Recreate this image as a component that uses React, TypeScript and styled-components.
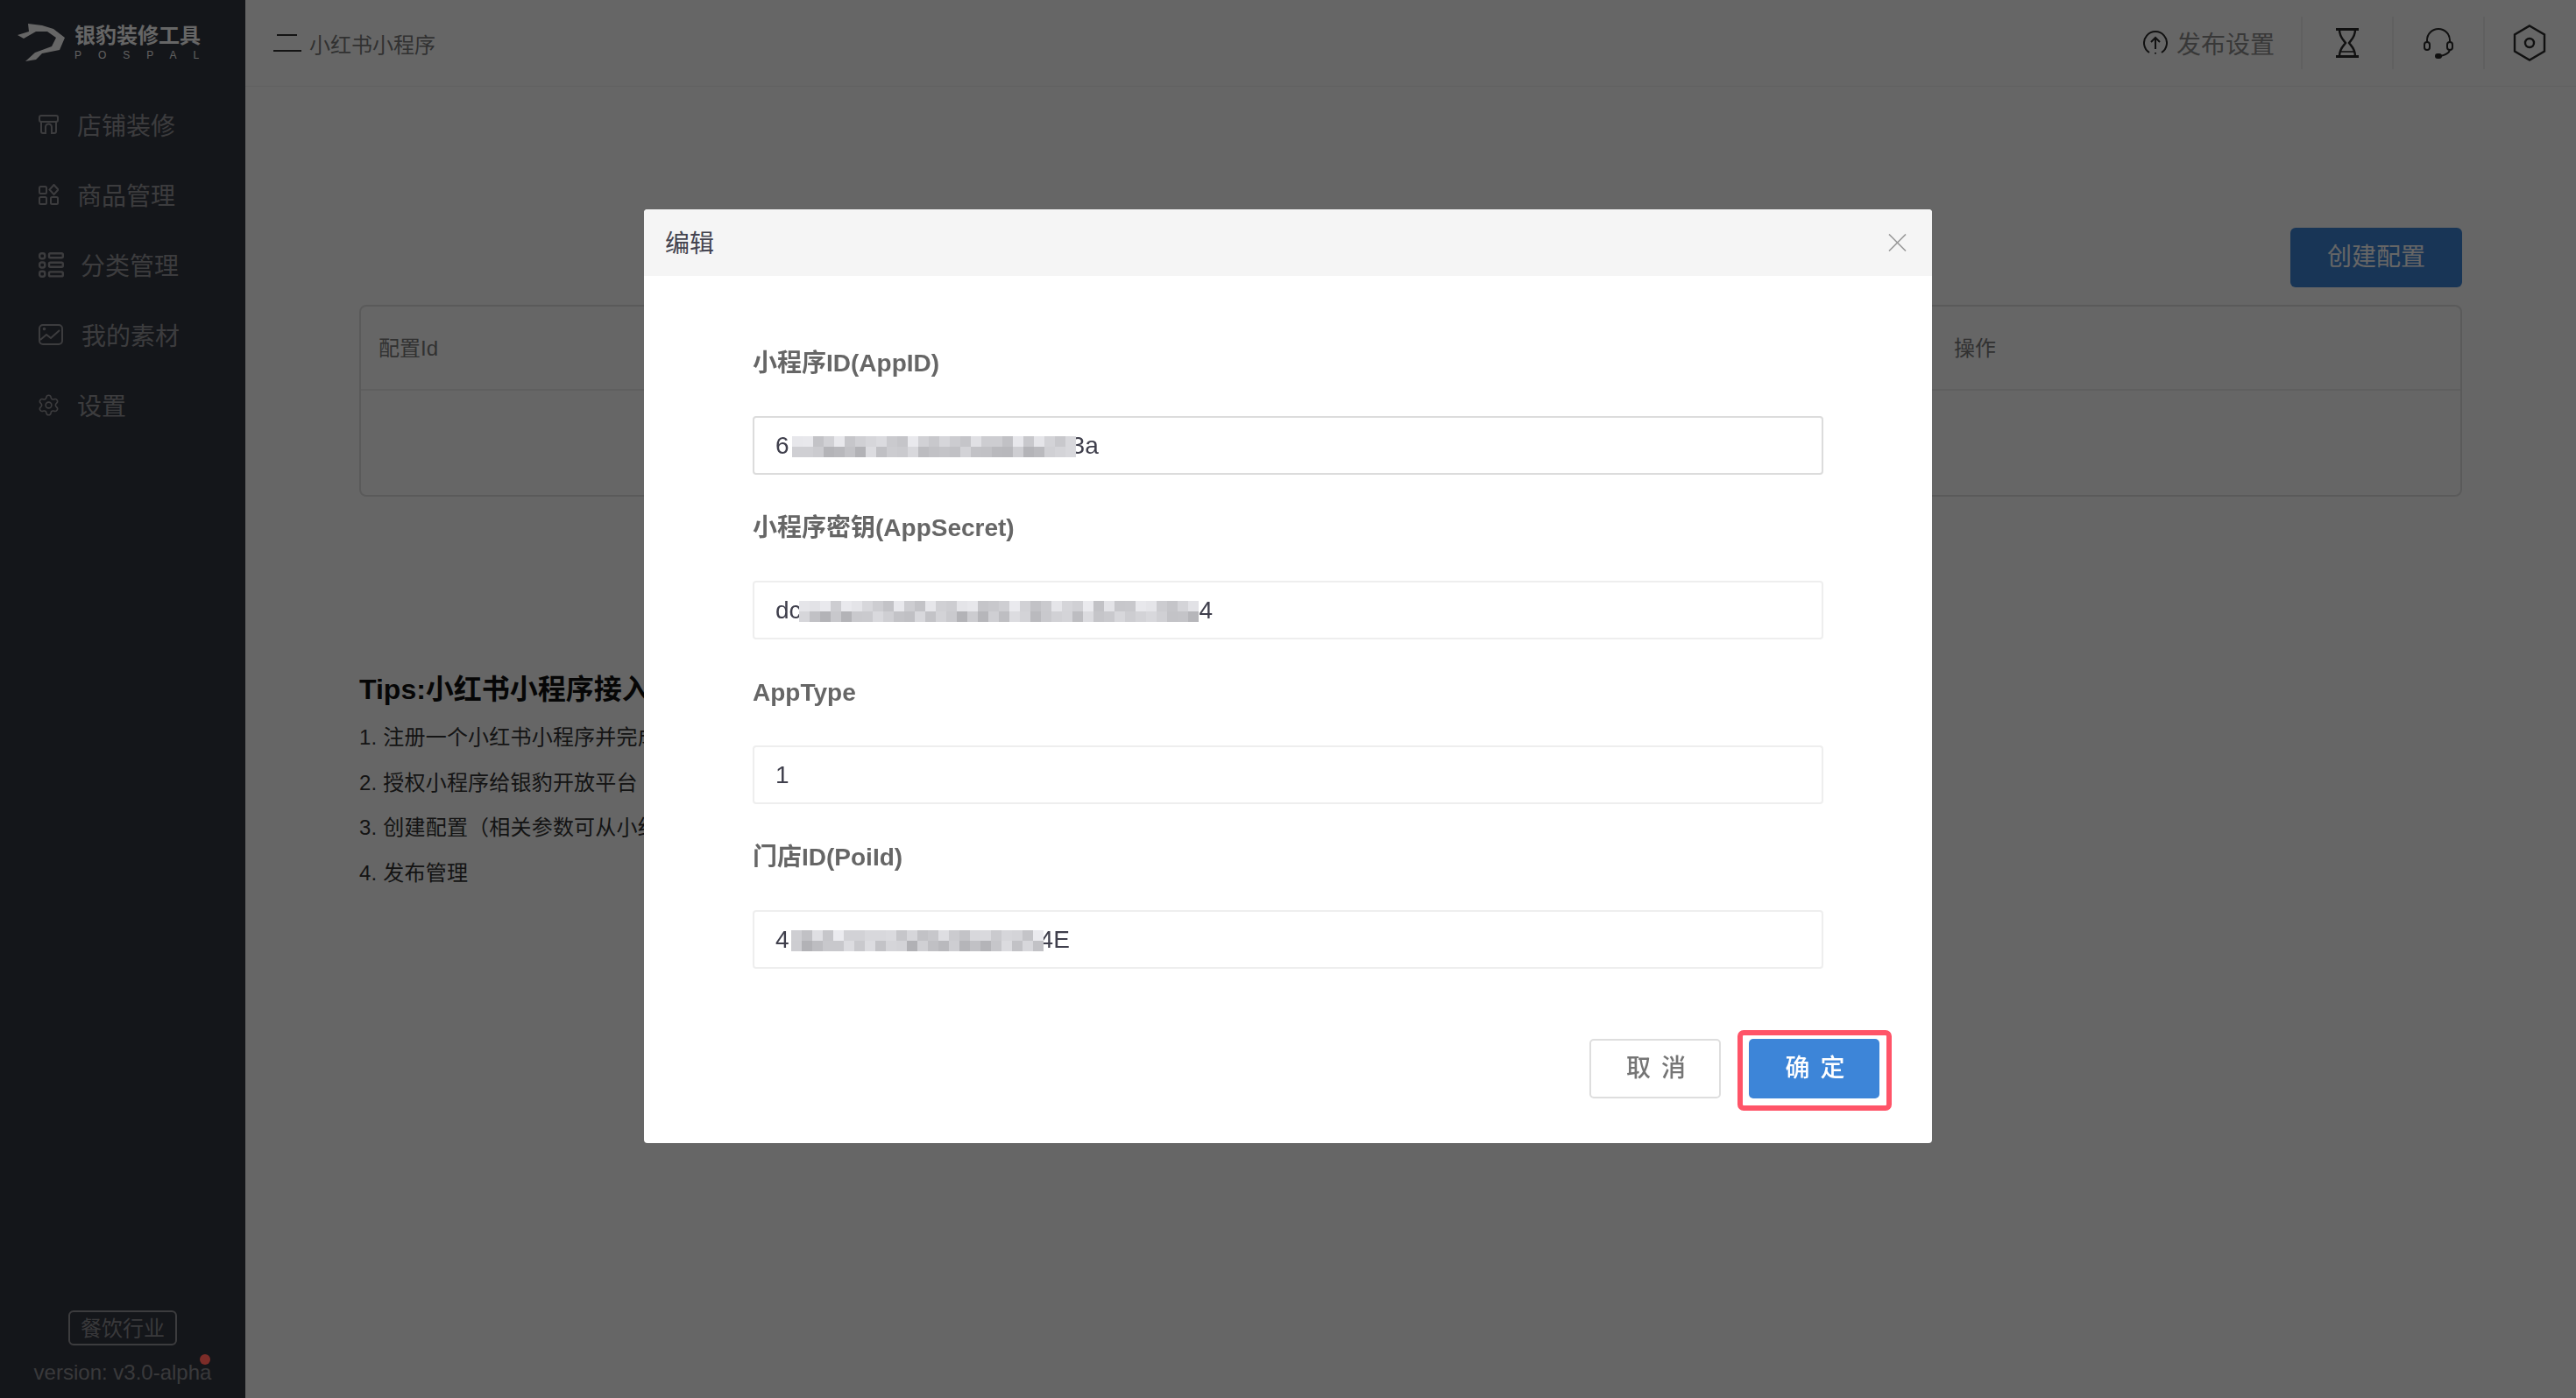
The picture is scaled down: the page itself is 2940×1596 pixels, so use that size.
import React from 'react';
import styled, { createGlobalStyle } from 'styled-components';
import { Settings } from 'lucide-react';

const GlobalStyle = createGlobalStyle`
  html, body {
    margin: 0;
    padding: 0;
    height: 100%;
    overflow: hidden;
    background: #fff;
    font-family: "Liberation Sans", "Noto Sans CJK SC", sans-serif;
  }
  * { box-sizing: border-box; }
`;

const Page = styled.div`
  display: flex;
  height: 100vh;
`;

const Sidebar = styled.aside`
  width: 280px;
  flex: none;
  display: flex;
  flex-direction: column;
  background: #343741;
  color: #9a9a9e;
`;

const Logo = styled.div`
  height: 99px;
  padding: 26px 0 0 20px;
  display: flex;
  gap: 11px;
  color: #fff;
`;

const LogoText = styled.div`
  display: flex;
  flex-direction: column;
`;

const LogoTitle = styled.div`
  font-size: 24px;
  line-height: 30px;
  font-weight: 700;
  color: #fff;
  white-space: nowrap;
`;

const LogoSub = styled.div`
  font-size: 12px;
  line-height: 13px;
  margin-top: 1px;
  letter-spacing: 19px;
  white-space: nowrap;
  color: #f0f0f0;
`;

const Nav = styled.nav`
  display: flex;
  flex-direction: column;
  padding-top: 3px;
  flex: 1;
`;

const NavItem = styled.div<{ $shift?: number; $gap?: number }>`
  height: 80px;
  display: flex;
  align-items: center;
  gap: ${(p) => p.$gap ?? 21}px;
  padding-left: ${(p) => 44 + (p.$shift || 0)}px;
  font-size: 28px;
  color: #97979c;
  white-space: nowrap;
  svg { flex: none; color: #97979c; }
`;

const SideFoot = styled.div`
  position: relative;
  display: flex;
  flex-direction: column;
  align-items: center;
  padding-bottom: 15px;
`;

const Badge = styled.div`
  width: 124px;
  height: 40px;
  border: 2px solid #97979c;
  border-radius: 6px;
  font-size: 24px;
  line-height: 38px;
  text-align: center;
  color: #8f8f94;
`;

const Version = styled.div`
  margin-top: 17px;
  font-size: 24px;
  line-height: 28px;
  color: #8f8f94;
  white-space: nowrap;
`;

const RedDot = styled.span`
  position: absolute;
  left: 228px;
  top: 50px;
  width: 12px;
  height: 12px;
  border-radius: 50%;
  background: #7c2c28;
  z-index: 20;
`;

const Main = styled.main`
  flex: 1;
  min-width: 0;
  display: flex;
  flex-direction: column;
`;

const Header = styled.header`
  height: 99px;
  flex: none;
  border-bottom: 1px solid #f0f0f0;
  display: flex;
  align-items: center;
  padding-left: 32px;
`;

const Crumb = styled.div`
  display: flex;
  align-items: center;
  gap: 9px;
  font-size: 24px;
  color: #7c7c7c;
  svg { color: #333; }
`;

const HeaderRight = styled.div`
  margin-left: auto;
  padding-right: 2px;
  display: flex;
  align-items: center;
`;

const PublishBtn = styled.div`
  display: flex;
  align-items: center;
  gap: 10px;
  height: 60px;
  padding-right: 30px;
  font-size: 28px;
  color: #8c8c8c;
  svg { color: #2b2b2b; }
`;

const ToolBtn = styled.div`
  width: 104px;
  height: 60px;
  border-left: 2px solid #f0f0f0;
  display: flex;
  align-items: center;
  justify-content: center;
  color: #2b2b2b;
`;

const Content = styled.section`
  padding: 161px 130px 0;
`;

const TopRow = styled.div`
  display: flex;
  justify-content: flex-end;
  margin-bottom: 20px;
`;

const CreateBtn = styled.div`
  width: 196px;
  height: 68px;
  border-radius: 6px;
  background: #3d85d8;
  color: #fff;
  font-size: 28px;
  line-height: 68px;
  text-align: center;
`;

const Table = styled.div`
  height: 219px;
  border: 2px solid #e2e2e2;
  border-radius: 8px;
`;

const TableHead = styled.div`
  height: 96px;
  border-bottom: 2px solid #eeeeee;
  display: grid;
  grid-template-columns: 1fr 578px;
  align-items: center;
  padding: 0 0 3px 20px;
  font-size: 24px;
  color: #7c7c7c;
`;

const Tips = styled.div`
  margin-top: 200px;
  color: #333;
`;

const TipsTitle = styled.h3`
  margin: 0 0 9px;
  font-size: 32px;
  line-height: 40px;
  font-weight: 700;
  color: #111;
  white-space: nowrap;
`;

const TipLine = styled.div`
  font-size: 24px;
  line-height: 51.5px;
  letter-spacing: 0.2px;
  white-space: nowrap;
`;

const Overlay = styled.div`
  position: fixed;
  inset: 0;
  z-index: 10;
  background: rgba(0, 0, 0, 0.6);
  display: flex;
  justify-content: center;
  align-items: flex-start;
  padding-top: 239px;
`;

const Modal = styled.div`
  width: 1470px;
  height: 1066px;
  background: #fff;
  border-radius: 4px;
  overflow: hidden;
  display: flex;
  flex-direction: column;
`;

const ModalHead = styled.div`
  height: 76px;
  flex: none;
  background: #f5f5f5;
  display: flex;
  align-items: center;
  justify-content: space-between;
  padding: 0 29px 2px 24px;
  font-size: 28px;
  color: #444450;
  svg { color: #999; margin-top: 2px; }
`;

const ModalBody = styled.div`
  padding: 80px 124px 0;
  display: flex;
  flex-direction: column;
  gap: 41px;
`;

const Field = styled.div`
  display: flex;
  flex-direction: column;
  gap: 41px;
`;

const FieldLabel = styled.label`
  font-size: 28px;
  line-height: 40px;
  font-weight: 700;
  color: #666;
  white-space: nowrap;
`;

const FieldValue = styled.div<{ $focus?: boolean }>`
  height: 67px;
  margin-top: -1px;
  border: 2px solid ${(p) => (p.$focus ? '#dcdcdc' : '#eeeeee')};
  border-radius: 4px;
  padding: 0 24px;
  display: flex;
  align-items: center;
  font-size: 28px;
  color: #3f3f4c;
  white-space: nowrap;
`;

const MosaicGrid = styled.span<{ $width: number; $left: number; $right: number }>`
  position: relative;
  z-index: 1;
  display: grid;
  grid-template-columns: repeat(auto-fill, 12px);
  grid-auto-rows: 12px;
  width: ${(p) => p.$width}px;
  height: 24px;
  margin: 2px ${(p) => p.$right}px 0 ${(p) => p.$left}px;
  overflow: hidden;
  flex: none;
`;

const ModalFoot = styled.div`
  display: flex;
  justify-content: flex-end;
  gap: 32px;
  padding: 80px 60px 0 0;
`;

const CancelBtn = styled.div`
  width: 150px;
  height: 68px;
  border: 2px solid #dedede;
  border-radius: 5px;
  font-size: 28px;
  font-weight: 500;
  line-height: 63px;
  letter-spacing: 2px;
  text-indent: 4px;
  text-align: center;
  color: #757575;
`;

const ConfirmBtn = styled.div`
  position: relative;
  width: 149px;
  height: 68px;
  border-radius: 5px;
  background: #3d85d8;
  font-size: 28px;
  font-weight: 500;
  line-height: 67px;
  letter-spacing: 2px;
  text-indent: 4px;
  text-align: center;
  color: #fff;

  &::after {
    content: '';
    position: absolute;
    inset: -10px -14px -14px -13px;
    border: 6px solid #ff5468;
    border-radius: 7px;
  }
`;

function Mosaic({ width, left, right, seed }: { width: number; left: number; right: number; seed: number }) {
  const count = Math.ceil(width / 12) * 2;
  let value = seed;
  const cells = [];
  for (let i = 0; i < count; i++) {
    value = (value * 9301 + 49297) % 233280;
    const top = i < count / 2;
    const base = top ? 214 : 198;
    const gray = base + Math.round((value / 233280 - 0.5) * 44);
    cells.push(
      <span key={i} style={{ background: `rgb(${gray},${gray},${gray + 4})` }} />
    );
  }
  return (
    <MosaicGrid $width={width} $left={left} $right={right}>
      {cells}
    </MosaicGrid>
  );
}

const StoreIcon = () => (
  <svg width="23" height="22" viewBox="0 0 23 22" fill="none" stroke="currentColor" strokeWidth="2">
    <path d="M3 1h17a2 2 0 0 1 2 2v3a2 2 0 0 1-2 2H3a2 2 0 0 1-2-2V3a2 2 0 0 1 2-2z" />
    <path d="M3 8v11a2 2 0 0 0 2 2h3V14a3.5 3.5 0 0 1 7 0v7h3a2 2 0 0 0 2-2V8" />
  </svg>
);

const GoodsIcon = () => (
  <svg width="23" height="24" viewBox="0 0 23 24" fill="none" stroke="currentColor" strokeWidth="2">
    <rect x="1" y="3" width="8" height="8" rx="1.5" />
    <rect x="1" y="15" width="8" height="8" rx="1.5" />
    <rect x="14" y="15" width="8" height="8" rx="1.5" />
    <path d="M17.5 1l5 5.5-5 5.5-5-5.5z" />
  </svg>
);

const CategoryIcon = () => (
  <svg width="29" height="29" viewBox="0 0 29 29" fill="none" stroke="currentColor" strokeWidth="2.4">
    <rect x="1.2" y="1.2" width="6" height="6" rx="2.2" />
    <rect x="1.2" y="11.5" width="6" height="6" rx="2.2" />
    <rect x="1.2" y="21.8" width="6" height="6" rx="2.2" />
    <rect x="12" y="1.2" width="15.8" height="5" rx="1.5" />
    <rect x="12" y="11.8" width="15.8" height="5" rx="1.5" />
    <rect x="12" y="22.4" width="15.8" height="5" rx="1.5" />
  </svg>
);

const ImageIcon = () => (
  <svg width="28" height="24" viewBox="0 0 28 24" fill="none" stroke="currentColor" strokeWidth="2">
    <rect x="1" y="1" width="26" height="22" rx="4" />
    <path d="M2 18l7-6 5 4 10-9" />
    <circle cx="6.5" cy="5.5" r="0.8" />
  </svg>
);

const HamburgerIcon = () => (
  <svg width="32" height="22" viewBox="0 0 32 22" fill="none" stroke="currentColor" strokeWidth="2">
    <path d="M4 2h23" />
    <path d="M0 20h32" />
  </svg>
);

const UploadIcon = () => (
  <svg width="28" height="28" viewBox="0 0 28 28" fill="none" stroke="currentColor" strokeWidth="2">
    <path d="M7 25a13 13 0 1 1 14 0" />
    <path d="M14 26.5v-1.5M14 21V8M9 13l5-5 5 5" />
  </svg>
);

const HourglassIcon = () => (
  <svg width="26" height="34" viewBox="0 0 26 34" fill="none" stroke="currentColor" strokeWidth="2.4">
    <path d="M0 1.5h26M0 32.5h26" strokeWidth="2.8" />
    <path d="M4 2c0 8 4 11 7 15-3 4-7 7-7 15M22 2c0 8-4 11-7 15 3 4 7 7 7 15" />
    <path d="M6 27h14" strokeWidth="1.6" />
  </svg>
);

const HeadsetIcon = () => (
  <svg width="34" height="36" viewBox="0 0 34 36" fill="none" stroke="currentColor" strokeWidth="2">
    <path d="M4 18v-3a13 13 0 0 1 26 0v3" />
    <rect x="1" y="17" width="6" height="9" rx="3" />
    <rect x="27" y="17" width="6" height="9" rx="3" />
    <path d="M30 26c-1 4-6 6-11 7" />
    <rect x="14" y="31" width="6" height="4" rx="2" fill="currentColor" />
  </svg>
);

const HexIcon = () => (
  <svg width="38" height="42" viewBox="0 0 38 42" fill="none" stroke="currentColor" strokeWidth="2.4">
    <path d="M19 1.5l17 10v19l-17 10-17-10v-19z" />
    <circle cx="19" cy="21" r="5" />
  </svg>
);

const CloseIcon = () => (
  <svg width="21" height="20" viewBox="0 0 21 20" fill="none" stroke="currentColor" strokeWidth="1.6">
    <path d="M1 0.5l19 19M20 0.5l-19 19" />
  </svg>
);

const PospalLogo = () => (
  <svg width="54" height="44" viewBox="0 0 54 44" fill="currentColor">
    <path d="M0 14l13-4-1-9 16 2 13 4 13 10-6 14-20 4-7 7-12 2 11-10 19-7 5-10-10-7H21L7 18z" />
    <path d="M31 12l7 2 1 3z" fill="#343741" />
  </svg>
);

export default function App() {
  return (
    <>
      <GlobalStyle />
      <Page>
        <Sidebar>
          <Logo>
            <PospalLogo />
            <LogoText>
              <LogoTitle>银豹装修工具</LogoTitle>
              <LogoSub>POSPAL</LogoSub>
            </LogoText>
          </Logo>
          <Nav>
            <NavItem><StoreIcon />店铺装修</NavItem>
            <NavItem><GoodsIcon />商品管理</NavItem>
            <NavItem $gap={19}><CategoryIcon />分类管理</NavItem>
            <NavItem><ImageIcon />我的素材</NavItem>
            <NavItem $shift={-2} $gap={19}><Settings size={27} strokeWidth={1.4} />设置</NavItem>
          </Nav>
          <SideFoot>
            <Badge>餐饮行业</Badge>
            <RedDot />
            <Version>version: v3.0-alpha</Version>
          </SideFoot>
        </Sidebar>
        <Main>
          <Header>
            <Crumb><HamburgerIcon />小红书小程序</Crumb>
            <HeaderRight>
              <PublishBtn><UploadIcon />发布设置</PublishBtn>
              <ToolBtn><HourglassIcon /></ToolBtn>
              <ToolBtn><HeadsetIcon /></ToolBtn>
              <ToolBtn><HexIcon /></ToolBtn>
            </HeaderRight>
          </Header>
          <Content>
            <TopRow><CreateBtn>创建配置</CreateBtn></TopRow>
            <Table>
              <TableHead>
                <span>配置Id</span>
                <span>操作</span>
              </TableHead>
            </Table>
            <Tips>
              <TipsTitle>Tips:小红书小程序接入流程</TipsTitle>
              <TipLine>1. 注册一个小红书小程序并完成认证</TipLine>
              <TipLine>2. 授权小程序给银豹开放平台</TipLine>
              <TipLine>3. 创建配置（相关参数可从小红书开放平台获取）</TipLine>
              <TipLine>4. 发布管理</TipLine>
            </Tips>
          </Content>
        </Main>
      </Page>
      <Overlay>
        <Modal>
          <ModalHead>
            编辑
            <CloseIcon />
          </ModalHead>
          <ModalBody>
            <Field>
              <FieldLabel>小程序ID(AppID)</FieldLabel>
              <FieldValue $focus>6<Mosaic width={327} left={3} right={-8} seed={17} />3a</FieldValue>
            </Field>
            <Field>
              <FieldLabel>小程序密钥(AppSecret)</FieldLabel>
              <FieldValue>dc<Mosaic width={456} left={-3} right={1} seed={91} />4</FieldValue>
            </Field>
            <Field>
              <FieldLabel>AppType</FieldLabel>
              <FieldValue>1</FieldValue>
            </Field>
            <Field>
              <FieldLabel>门店ID(PoiId)</FieldLabel>
              <FieldValue>4<Mosaic width={296} left={2} right={-12} seed={53} />4E</FieldValue>
            </Field>
          </ModalBody>
          <ModalFoot>
            <CancelBtn>取 消</CancelBtn>
            <ConfirmBtn>确 定</ConfirmBtn>
          </ModalFoot>
        </Modal>
      </Overlay>
    </>
  );
}
